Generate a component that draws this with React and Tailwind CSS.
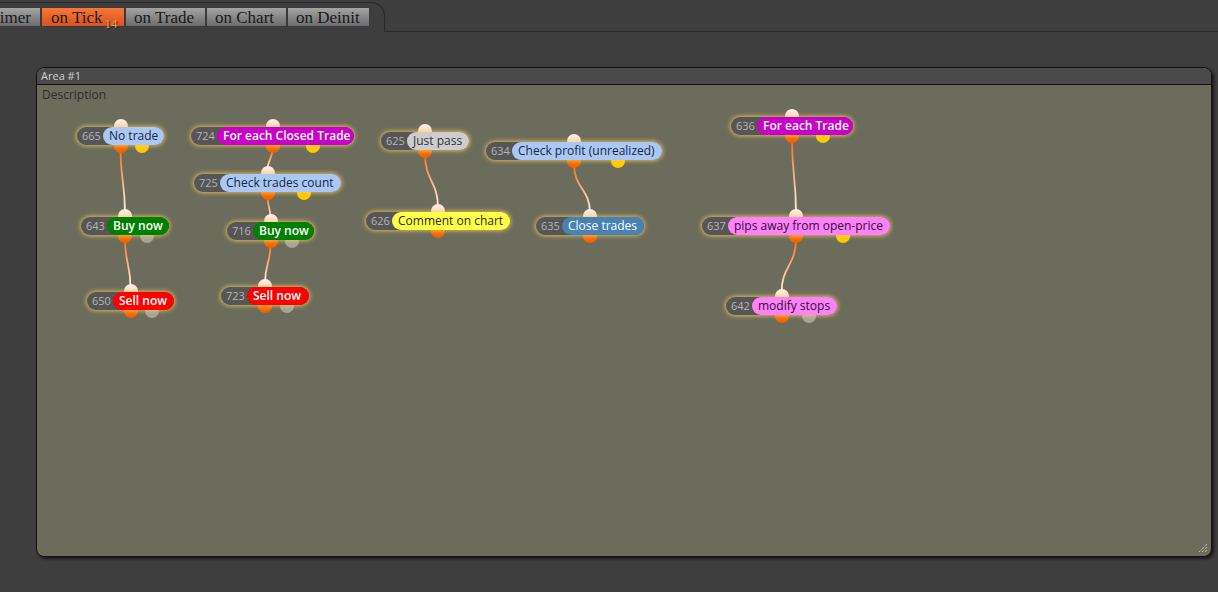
import React from 'react';

// page coords of the canvas origin (inside panel body)
const OX = 37;
const OY = 85;

const LIGHT = 'bg-[#a9c8f6] text-[#1d2740]';
const MAGENTA = 'bg-[#c800c8] text-white font-semibold';
const GREEN = 'bg-[#008000] text-white font-semibold';
const RED = 'bg-[#ff0000] text-white font-semibold';
const VIOLET = 'bg-[#ff80fb] text-[#2a1030]';

const NODES = [
  { id: 665, label: 'No trade', x: 77, y: 127, w: 87, cls: LIGHT, out: 'yellow' },
  { id: 724, label: 'For each Closed Trade', x: 191, y: 127, w: 163, cls: MAGENTA, out: 'yellow' },
  { id: 725, label: 'Check trades count', x: 194, y: 174, w: 147, cls: LIGHT, out: 'yellow' },
  { id: 643, label: 'Buy now', x: 81, y: 217, w: 88, cls: GREEN, out: 'gray' },
  { id: 716, label: 'Buy now', x: 227, y: 222, w: 87, cls: GREEN, out: 'gray' },
  { id: 650, label: 'Sell now', x: 87, y: 292, w: 87, cls: RED, out: 'gray' },
  { id: 723, label: 'Sell now', x: 221, y: 287, w: 88, cls: RED, out: 'gray' },
  { id: 625, label: 'Just pass', x: 381, y: 132, w: 88, cls: 'bg-[#cdcdcd] text-[#333]', out: null },
  { id: 626, label: 'Comment on chart', x: 366, y: 212, w: 144, cls: 'bg-[#ffff48] text-[#2a2a10]', out: null },
  { id: 634, label: 'Check profit (unrealized)', x: 486, y: 142, w: 176, cls: LIGHT, out: 'yellow' },
  { id: 635, label: 'Close trades', x: 536, y: 217, w: 108, cls: 'bg-[#4682b4] text-white', out: null },
  { id: 636, label: 'For each Trade', x: 731, y: 117, w: 122, cls: MAGENTA, out: 'yellow' },
  { id: 637, label: 'pips away from open-price', x: 702, y: 217, w: 188, cls: VIOLET, out: 'yellow' },
  { id: 642, label: 'modify stops', x: 726, y: 297, w: 111, cls: VIOLET, out: 'gray' },
];

const LINKS = [
  [665, 643],
  [724, 725],
  [725, 716],
  [643, 650],
  [716, 723],
  [625, 626],
  [634, 635],
  [636, 637],
  [637, 642],
];

const byId = Object.fromEntries(NODES.map((n) => [n.id, n]));

function ends(a, b) {
  const A = byId[a];
  const B = byId[b];
  return {
    x1: A.x + A.w / 2 - OX,
    y1: A.y + 22 - OY,
    x2: B.x + B.w / 2 - OX,
    y2: B.y - 4 - OY,
  };
}

function Node({ n }) {
  return (
    <div className="absolute h-[18px]" style={{ left: n.x - OX, top: n.y - OY, width: n.w }}>
      <span className="absolute left-1/2 -translate-x-1/2 -top-[8px] w-[14px] h-[14px] rounded-full bg-linear-to-b from-[#fff0ea] to-[#f6c9b4]" />
      <span className="absolute left-1/2 -translate-x-1/2 -bottom-[8px] w-[14px] h-[14px] rounded-full bg-linear-to-b from-[#ff7a10] to-[#f06000]" />
      {n.out === 'yellow' && (
        <span className="absolute left-3/4 -translate-x-1/2 -bottom-[8px] w-[14px] h-[14px] rounded-full bg-[#ffc800]" />
      )}
      {n.out === 'gray' && (
        <span className="absolute left-3/4 -translate-x-1/2 -bottom-[8px] w-[14px] h-[14px] rounded-full bg-[#a4a49a]" />
      )}
      <div className="relative flex h-full rounded-full bg-[#565656] shadow-[0_0_4px_1px_rgba(255,212,90,0.75)]">
        <span className="w-[26px] shrink-0 pl-[5px] text-[11px] leading-[18px] text-[#b4b4b4]">{n.id}</span>
        <span className={`flex-1 rounded-full pl-[6px] text-[12px] leading-[18px] whitespace-nowrap overflow-hidden ${n.cls}`}>
          {n.label}
        </span>
      </div>
    </div>
  );
}

function Links() {
  return (
    <svg className="absolute inset-0 w-full h-full pointer-events-none">
      <defs>
        {LINKS.map(([a, b]) => {
          const { x1, y1, x2, y2 } = ends(a, b);
          return (
            <linearGradient key={a} id={`g${a}`} gradientUnits="userSpaceOnUse" x1={x1} y1={y1} x2={x2} y2={y2}>
              <stop offset="0" stopColor="#ff6a10" />
              <stop offset="1" stopColor="#fff4ee" />
            </linearGradient>
          );
        })}
      </defs>
      {LINKS.map(([a, b]) => {
        const { x1, y1, x2, y2 } = ends(a, b);
        const ym = (y1 + y2) / 2;
        return (
          <path
            key={a}
            d={`M${x1} ${y1} C${x1} ${ym} ${x2} ${ym} ${x2} ${y2}`}
            fill="none"
            stroke={`url(#g${a})`}
            strokeWidth="1.8"
          />
        );
      })}
    </svg>
  );
}

function Tab({ children, active, className = '' }) {
  return (
    <div
      className={`h-[20px] border border-[#3a3a3a] flex items-center text-[17px] leading-none text-[#1a1a1a] ${
        active ? 'bg-linear-to-b from-[#f57838] to-[#d9531c]' : 'bg-linear-to-b from-[#a4a4a4] to-[#6c6c6c]'
      } ${className}`}
    >
      {children}
    </div>
  );
}

export default function App() {
  return (
    <div className="h-[592px] w-[1218px] bg-[#3e3e3e] overflow-hidden" style={{ fontFamily: '"Open Sans", sans-serif' }}>
      {/* tab strip */}
      <div className="flex h-[32px]" style={{ fontFamily: '"Liberation Serif", serif' }}>
        <div className="mt-[2px] w-[385px] h-[30px] border-t border-r border-[#2a2a2a] rounded-tr-[14px] flex items-start pt-[4px]">
          <Tab className="w-[41px] justify-end pr-[9px] border-l-0">imer</Tab>
          <Tab active className="w-[84px] pl-[9px]">
            on Tick
            <span className="relative top-[6px] ml-[2px] text-[13px] text-[#e89a5a] [text-shadow:1px_1px_1px_#222]">14</span>
          </Tab>
          <Tab className="w-[81px] pl-[8px]">on Trade</Tab>
          <Tab className="w-[81px] pl-[8px]">on Chart</Tab>
          <Tab className="w-[83px] pl-[8px]">on Deinit</Tab>
        </div>
        <div className="flex-1 border-b border-[#2a2a2a]" />
      </div>

      {/* panel */}
      <div className="mt-[35px] ml-[36px] w-[1176px] h-[490px] flex flex-col rounded-[8px] border border-[#111] bg-[#6c6c5c] shadow-[2px_2px_3px_rgba(0,0,0,0.6)] overflow-hidden relative">
        <div className="h-[17px] shrink-0 bg-[#4a4a4a] border-b border-[#111] pl-[4px] text-[11px] leading-[16px] text-[#cfcfcf]">
          Area #1
        </div>
        <div className="relative flex-1">
          <div className="pl-[5px] pt-[1px] text-[12px] text-[#2e2e2e]">Description</div>
          <Links />
          {NODES.map((n) => (
            <Node key={n.id} n={n} />
          ))}
        </div>
        <svg className="absolute right-[4px] bottom-[4px] w-[8px] h-[8px]" viewBox="0 0 8 8">
          <path d="M8 0 L0 8 M8 3 L3 8 M8 6 L6 8" stroke="#e8e8e8" strokeWidth="1" strokeDasharray="1 1" />
        </svg>
      </div>
    </div>
  );
}
